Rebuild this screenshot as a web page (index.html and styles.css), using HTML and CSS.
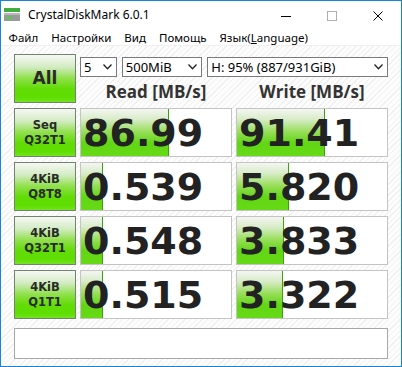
FILE: index.html
```html
<!DOCTYPE html>
<html lang="ru">
<head>
  <meta charset="UTF-8">
  <title>CrystalDiskMark 6.0.1</title>
  <link rel="stylesheet" href="styles.css">
</head>
<body>
  <div class="window">
    <div class="titlebar">
      <svg class="app-icon" width="16" height="16" viewBox="0 0 16 16">
        <rect x="0" y="1" width="16" height="4" fill="#3fae3f"/>
        <rect x="0" y="6" width="16" height="8" fill="#9a9a9a"/>
        <rect x="0" y="6" width="16" height="2" fill="#b8b8b8"/>
        <rect x="2" y="10" width="6" height="2" fill="#4cd04c"/>
      </svg>
      <span class="title">CrystalDiskMark 6.0.1</span>
      <div class="controls">
        <span class="ctl"><svg width="10" height="10" viewBox="0 0 10 10"><line x1="0" y1="5.5" x2="10" y2="5.5" stroke="#000" stroke-width="1"/></svg></span>
        <span class="ctl"><svg width="10" height="10" viewBox="0 0 10 10"><rect x="0.5" y="0.5" width="9" height="9" fill="none" stroke="#b0b0b0" stroke-width="1"/></svg></span>
        <span class="ctl"><svg width="10" height="10" viewBox="0 0 10 10"><path d="M0.5 0.5 L9.5 9.5 M9.5 0.5 L0.5 9.5" stroke="#000" stroke-width="1"/></svg></span>
      </div>
    </div>

    <div class="menubar">
      <span class="menu">Файл</span>
      <span class="menu">Настройки</span>
      <span class="menu">Вид</span>
      <span class="menu">Помощь</span>
      <span class="menu">Язык(<u>L</u>anguage)</span>
    </div>

    <div class="client">
      <div class="board">
        <div class="btn btn-all">All</div>
        <div class="selects">
          <div class="select s-count">5<svg class="chev" width="9" height="6" viewBox="0 0 9 6"><polyline points="0.5,0.5 4.5,4.8 8.5,0.5" fill="none" stroke="#222" stroke-width="1.3"/></svg></div>
          <div class="select s-size">500MiB<svg class="chev" width="9" height="6" viewBox="0 0 9 6"><polyline points="0.5,0.5 4.5,4.8 8.5,0.5" fill="none" stroke="#222" stroke-width="1.3"/></svg></div>
          <div class="select s-drive">H: 95% (887/931GiB)<svg class="chev" width="9" height="6" viewBox="0 0 9 6"><polyline points="0.5,0.5 4.5,4.8 8.5,0.5" fill="none" stroke="#222" stroke-width="1.3"/></svg></div>
        </div>
        <div class="head">Read [MB/s]</div>
        <div class="head">Write [MB/s]</div>

        <div class="btn">Seq<br>Q32T1</div>
        <div class="cell"><div class="bar" style="width: 87px"></div><span class="num">86.99</span></div>
        <div class="cell"><div class="bar" style="width: 87px"></div><span class="num">91.41</span></div>

        <div class="btn">4KiB<br>Q8T8</div>
        <div class="cell"><div class="bar" style="width: 21px"></div><span class="num">0.539</span></div>
        <div class="cell"><div class="bar" style="width: 51px"></div><span class="num">5.820</span></div>

        <div class="btn">4KiB<br>Q32T1</div>
        <div class="cell"><div class="bar" style="width: 21px"></div><span class="num">0.548</span></div>
        <div class="cell"><div class="bar" style="width: 46px"></div><span class="num">3.833</span></div>

        <div class="btn">4KiB<br>Q1T1</div>
        <div class="cell"><div class="bar" style="width: 21px"></div><span class="num">0.515</span></div>
        <div class="cell"><div class="bar" style="width: 45px"></div><span class="num">3.322</span></div>
      </div>
      <div class="comment"></div>
    </div>
  </div>
</body>
</html>
```

FILE: styles.css
```css
html, body {
  margin: 0;
  padding: 0;
  background: #fff;
}
.window {
  width: 400px;
  height: 365px;
  border: 1px solid #1883d7;
  display: flex;
  flex-direction: column;
  font-family: 'Noto Sans', sans-serif;
  color: #000;
  overflow: hidden;
}
.titlebar {
  height: 29px;
  display: flex;
  align-items: center;
  background: #fff;
}
.app-icon {
  margin: 0 8px 2px 3px;
}
.title {
  font-size: 12px;
  margin-bottom: 2px;
}
.controls {
  margin-left: auto;
  display: flex;
  height: 29px;
}
.ctl {
  width: 46px;
  display: flex;
  align-items: center;
  justify-content: center;
}
.menubar {
  height: 15px;
  display: flex;
  align-items: center;
  padding-left: 1px;
  background: #fff;
  border-bottom: 1px solid #f0f0f0;
  font-size: 11.5px;
}
.menu {
  padding: 0 6.5px;
}
.menu u {
  text-underline-offset: 1px;
}
.client {
  flex: 1;
  padding: 8px 0 0 13px;
  background: repeating-linear-gradient(135deg, #fdfdfd 0 3px, #f0f0f0 3px 4px);
}
.board {
  display: grid;
  grid-template-columns: 62px 152px 152px;
  grid-template-rows: 21px 28px repeat(4, 54px);
  column-gap: 4px;
}
.btn {
  box-sizing: border-box;
  border: 1px solid #72836f;
  background: linear-gradient(to bottom, #f6f8f4 0%, #d4ecc4 25%, #8fe04a 50%, #62dc06 72%, #5ede00 90%, #74e222 100%);
  font-family: 'DejaVu Sans', sans-serif;
  font-weight: bold;
  font-size: 11.5px;
  line-height: 15px;
  color: #2a2a2a;
  text-align: center;
  display: flex;
  align-items: center;
  justify-content: center;
  margin-top: 5px;
}
.btn-all {
  grid-row: 1 / 3;
  margin-top: 0;
  font-size: 17px;
}
.selects {
  grid-column: 2 / 4;
  display: flex;
  gap: 5px;
  padding-top: 3px;
}
.select {
  box-sizing: border-box;
  height: 20px;
  border: 1px solid #7a7a7a;
  background: #fff;
  font-size: 13px;
  line-height: 18px;
  padding-left: 3px;
  position: relative;
}
.s-count { width: 37px; }
.s-size { width: 81px; }
.s-drive { width: 182px; }
.chev {
  position: absolute;
  right: 4px;
  top: 6px;
}
.head {
  font-family: 'Open Sans', sans-serif;
  font-weight: bold;
  font-size: 17px;
  line-height: 20px;
  color: #333;
  text-align: center;
  padding-top: 7px;
}
.cell {
  box-sizing: border-box;
  margin-top: 5px;
  border: 1px solid #c4c4c4;
  background: #fff;
  position: relative;
  display: flex;
  align-items: center;
}
.bar {
  position: absolute;
  left: 0;
  top: 0;
  bottom: 0;
  border-right: 1px solid #3e9e14;
  background: linear-gradient(to bottom, #f4f6f2 0%, #d8ecc8 22%, #98de5a 48%, #62d614 72%, #66da16 100%);
}
.num {
  position: relative;
  font-family: 'DejaVu Sans', sans-serif;
  font-weight: bold;
  font-size: 38px;
  line-height: 38px;
  color: #222;
  padding-left: 2px;
  padding-top: 1px;
}
.comment {
  box-sizing: border-box;
  width: 374px;
  height: 31px;
  margin-top: 9px;
  border: 1px solid #a8a8a8;
  background: #fff;
}
```
